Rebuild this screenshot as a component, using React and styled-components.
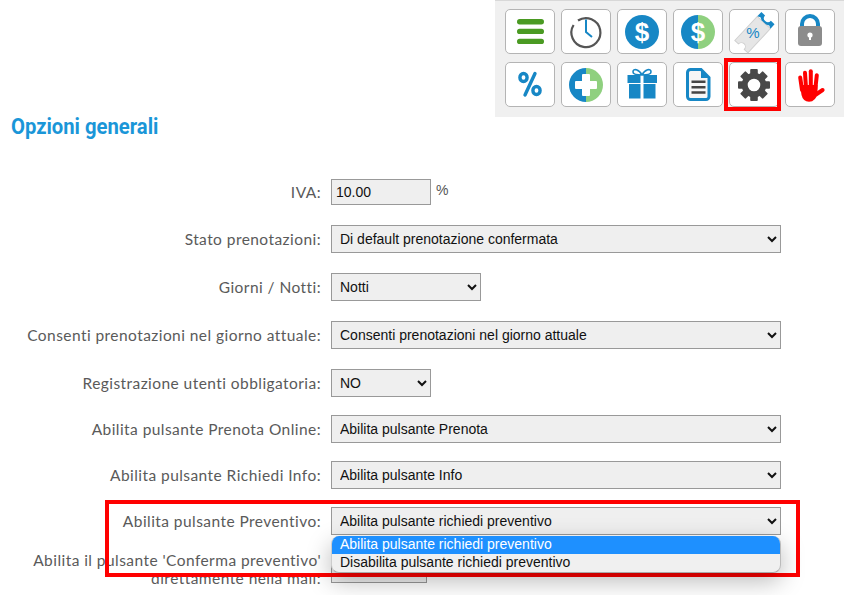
import React from "react";
import styled, { createGlobalStyle } from "styled-components";

const Global = createGlobalStyle`
  html, body { margin: 0; padding: 0; background: #fff; }
`;

const Page = styled.div`
  position: relative;
  width: 844px;
  height: 595px;
  overflow: hidden;
  background: #fff;
  font-family: "Liberation Sans", Arial, sans-serif;
`;

const Toolbar = styled.div`
  box-sizing: border-box;
  width: 349px;
  height: 117px;
  margin-left: 495px;
  padding: 8px 10px 0;
  background: #f0f0f0;
  border-top: 1px solid #d8d8d8;
  display: grid;
  grid-template-columns: repeat(6, 50px);
  grid-auto-rows: 45px;
  column-gap: 6px;
  row-gap: 8px;
`;

const ToolButton = styled.div`
  position: relative;
  box-sizing: border-box;
  width: 50px;
  height: 45px;
  background: #fff;
  border: 1px solid #b4b4b4;
  border-radius: 5px;
`;

const Icon = styled.svg`
  position: absolute;
  left: -1px;
  top: -1px;
  width: 50px;
  height: 45px;
`;

const Highlight = styled.div`
  position: absolute;
  box-sizing: border-box;
  border: 4px solid #ff0000;
  pointer-events: none;
`;

const GearHighlight = styled(Highlight)`
  left: 724px;
  top: 58px;
  width: 57px;
  height: 53px;
`;

const SelectHighlight = styled(Highlight)`
  left: 105px;
  top: 500px;
  width: 695px;
  height: 77px;
`;

const Heading = styled.h1`
  margin: -3px 0 0 11px;
  font-family: "Roboto", sans-serif;
  font-size: 22px;
  line-height: 26px;
  font-weight: 700;
  color: #1a96d8;
  transform: scaleX(0.92);
  transform-origin: left center;
`;

const Form = styled.div`
  padding-top: 39px;
`;

const Row = styled.div`
  display: flex;
  align-items: center;
  gap: 10px;
  margin-top: ${(p) => p.$gap}px;
`;

const Label = styled.div`
  width: 321px;
  flex: none;
  text-align: right;
  font-family: "Lato", sans-serif;
  font-size: 15.5px;
  line-height: 18px;
  letter-spacing: 0.44px;
  color: #5a5a5a;
`;

const TextField = styled.input`
  box-sizing: border-box;
  width: 100px;
  height: 26px;
  padding: 0 4px;
  background: #efefef;
  border: 1px solid #999;
  font-family: "Liberation Sans", Arial, sans-serif;
  font-size: 14px;
  color: #111;
  outline: none;
`;

const Unit = styled.span`
  font-family: "Liberation Sans", Arial, sans-serif;
  font-size: 14px;
  color: #555;
  margin: -4px 0 0 -5px;
`;

const Select = styled.select`
  box-sizing: border-box;
  width: ${(p) => p.$w}px;
  height: 28px;
  padding: 0 4px;
  background-color: #efefef;
  border: 1px solid #999;
  border-radius: 0;
  font-family: "Liberation Sans", Arial, sans-serif;
  font-size: 14px;
  color: #111;
  outline: none;
`;

const Popup = styled.div`
  position: absolute;
  left: 331px;
  top: 536px;
  box-sizing: border-box;
  width: 450px;
  height: 37px;
  background: #f0f0f0;
  border-radius: 8px;
  border-bottom: 1px solid #aaa;
  border-right: 1px solid #bbb;
  border-left: 1px solid #ccc;
  overflow: hidden;
  box-shadow: 0 8px 24px rgba(0, 0, 0, 0.28);
  font-size: 14px;
`;

const PopupOption = styled.div`
  height: 18px;
  line-height: 17px;
  padding-left: 8px;
  background: ${(p) => (p.$active ? "#1e90ff" : "transparent")};
  color: ${(p) => (p.$active ? "#fff" : "#111")};
`;

const BLUE = "#1787c5";
const GREEN = "#8fd07f";

const Halves = () => (
  <>
    <path d="M25 6a17 17 0 0 0 0 34z" fill={BLUE} />
    <path d="M25 6a17 17 0 0 1 0 34z" fill={GREEN} />
  </>
);

const Dollar = () => (
  <text x="25" y="32" textAnchor="middle" fontFamily="Liberation Sans" fontWeight="700" fontSize="26" fill="#fff">$</text>
);

const icons = [
  <Icon viewBox="0 0 50 45" key="menu">
    <g fill="#4a9a22">
      <rect x="12" y="10" width="27" height="5.4" rx="2.7" />
      <rect x="12" y="19.7" width="27" height="5.4" rx="2.7" />
      <rect x="12" y="29.7" width="27" height="5.4" rx="2.7" />
    </g>
  </Icon>,
  <Icon viewBox="0 0 50 45" key="clock">
    <path d="M17 11.5A14.5 14.5 0 1 1 12.6 16" fill="none" stroke="#555" strokeWidth="2.2" />
    <path d="M25 10.5V23l6 5" fill="none" stroke={BLUE} strokeWidth="2" />
  </Icon>,
  <Icon viewBox="0 0 50 45" key="dollar">
    <circle cx="25" cy="23" r="17" fill={BLUE} />
    <Dollar />
  </Icon>,
  <Icon viewBox="0 0 50 45" key="dollar2">
    <Halves />
    <Dollar />
  </Icon>,
  <Icon viewBox="0 0 50 45" key="ticket">
    <g transform="rotate(-47 26 23)">
      <path d="M6 14h33v18H6v-5a4 4 0 0 0 0-8z" fill="#e6e6e6" stroke="#d0d0d0" />
      <path d="M39 14h6v5a4 4 0 0 0 0 8v5h-6l1.5-3-1.5-3v-6l1.5-3z" fill={BLUE} />
    </g>
    <text x="24" y="28.5" textAnchor="middle" fontFamily="Liberation Sans" fontSize="15" fill={BLUE}>%</text>
  </Icon>,
  <Icon viewBox="0 0 50 45" key="lock">
    <path d="M17 18v-3a8 8 0 0 1 16 0v3" fill="none" stroke={BLUE} strokeWidth="4" />
    <rect x="13" y="17" width="24" height="20" rx="3" fill="#8c8c8c" />
    <circle cx="25" cy="26" r="2.6" fill="#fff" />
    <rect x="24" y="26" width="2" height="5" fill="#fff" />
  </Icon>,
  <Icon viewBox="0 0 50 45" key="percent">
    <g fill="none" stroke={BLUE} strokeWidth="3.4" strokeLinecap="round">
      <path d="M30 11.5 20 33" />
      <ellipse cx="18.5" cy="15.5" rx="3.6" ry="4" />
      <ellipse cx="31.5" cy="28.5" rx="3.6" ry="4" />
    </g>
  </Icon>,
  <Icon viewBox="0 0 50 45" key="plus">
    <Halves />
    <rect x="21" y="12" width="8" height="22" rx="1" fill="#fff" />
    <rect x="14" y="19" width="22" height="8" rx="1" fill="#fff" />
  </Icon>,
  <Icon viewBox="0 0 50 45" key="gift">
    <g fill={BLUE}>
      <rect x="10.5" y="13" width="29.5" height="8" />
      <rect x="12" y="22" width="26.5" height="14.5" />
    </g>
    <rect x="23.5" y="13" width="3" height="24" fill="#fff" />
    <path d="M25 13c-3-6-9-7-9-3 0 2 4 3 9 3zM25 13c3-6 9-7 9-3 0 2-4 3-9 3z" fill="none" stroke={BLUE} strokeWidth="1.6" />
  </Icon>,
  <Icon viewBox="0 0 50 45" key="doc">
    <path d="M17.5 7.5H28L36 15.5V34.5a3 3 0 0 1-3 3H17.5a3 3 0 0 1-3-3V10.5a3 3 0 0 1 3-3z" fill="#f6f6f6" stroke={BLUE} strokeWidth="3" />
    <path d="M28 7v9h9z" fill={BLUE} />
    <path d="M18.5 19.7h14M18.5 25.3h14M18.5 30.5h14" stroke="#444" strokeWidth="2.4" />
  </Icon>,
  <Icon viewBox="0 0 50 45" key="gear">
    <g fill="#484848">
      {[0, 45, 90, 135, 180, 225, 270, 315].map((a) => (
        <rect key={a} x="21.2" y="7" width="7.6" height="8" rx="1" transform={`rotate(${a} 25 23)`} />
      ))}
    </g>
    <circle cx="25" cy="23" r="9.3" fill="none" stroke="#484848" strokeWidth="6" />
  </Icon>,
  <Icon viewBox="0 0 50 45" key="hand">
    <g stroke="#ff0000" strokeWidth="4" strokeLinecap="round" fill="none">
      <path d="M15.2 15.5 17 28" />
      <path d="M20 10.8 21 26" />
      <path d="M25.8 9.3V26" />
      <path d="M31.8 13.3 30.3 27" />
      <path d="M37.6 28 31 32.5" />
    </g>
    <path d="M15 23H32.5V31Q31 39.5 24 39.8 18 39.5 16.5 33Z" fill="#ff0000" />
  </Icon>,
];

const App = () => (
  <Page>
    <Global />
    <Toolbar>
      {icons.map((icon, i) => (
        <ToolButton key={i}>{icon}</ToolButton>
      ))}
    </Toolbar>
    <Heading>Opzioni generali</Heading>
    <Form>
      <Row $gap={0}>
        <Label>IVA:</Label>
        <TextField defaultValue="10.00" />
        <Unit>%</Unit>
      </Row>
      <Row $gap={20}>
        <Label>Stato prenotazioni:</Label>
        <Select $w={450}><option>Di default prenotazione confermata</option></Select>
      </Row>
      <Row $gap={20}>
        <Label>Giorni / Notti:</Label>
        <Select $w={150}><option>Notti</option></Select>
      </Row>
      <Row $gap={20}>
        <Label>Consenti prenotazioni nel giorno attuale:</Label>
        <Select $w={450}><option>Consenti prenotazioni nel giorno attuale</option></Select>
      </Row>
      <Row $gap={20}>
        <Label>Registrazione utenti obbligatoria:</Label>
        <Select $w={100}><option>NO</option></Select>
      </Row>
      <Row $gap={18}>
        <Label>Abilita pulsante Prenota Online:</Label>
        <Select $w={450}><option>Abilita pulsante Prenota</option></Select>
      </Row>
      <Row $gap={18}>
        <Label>Abilita pulsante Richiedi Info:</Label>
        <Select $w={450}><option>Abilita pulsante Info</option></Select>
      </Row>
      <Row $gap={18}>
        <Label>Abilita pulsante Preventivo:</Label>
        <Select $w={450}><option>Abilita pulsante richiedi preventivo</option></Select>
      </Row>
      <Row $gap={16}>
        <Label>Abilita il pulsante 'Conferma preventivo' direttamente nella mail:</Label>
        <Select $w={96}><option>NO</option></Select>
      </Row>
    </Form>
    <GearHighlight />
    <SelectHighlight />
    <Popup>
      <PopupOption $active>Abilita pulsante richiedi preventivo</PopupOption>
      <PopupOption>Disabilita pulsante richiedi preventivo</PopupOption>
    </Popup>
  </Page>
);

export default App;
